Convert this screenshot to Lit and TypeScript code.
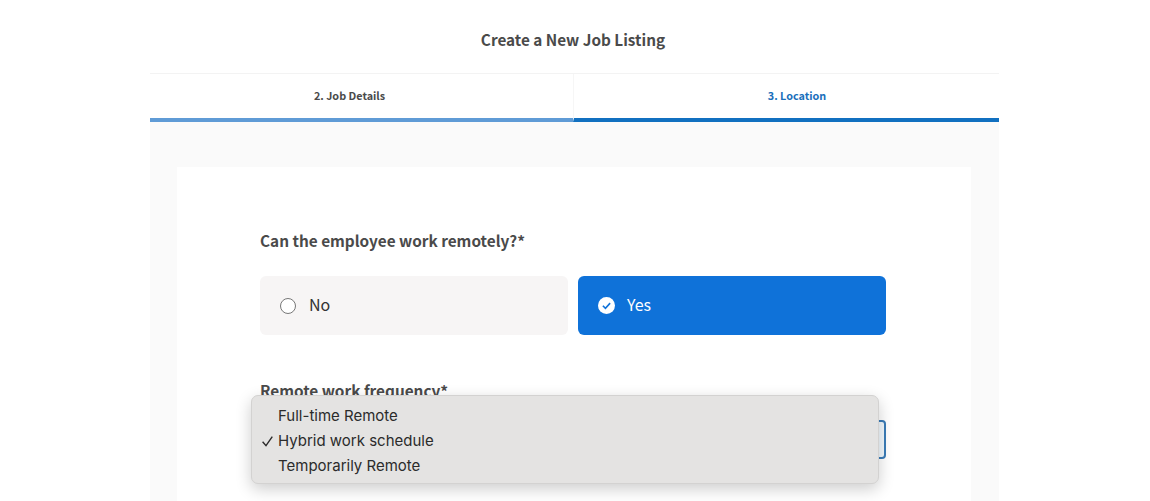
import { LitElement, html, css } from "lit";
import { customElement } from "lit/decorators.js";

@customElement("app-root")
export class AppRoot extends LitElement {
  static styles = css`
    :host {
      display: block;
      width: 1150px;
      height: 501px;
      overflow: hidden;
      background: #fff;
      color: #4a4a4a;
      font-family: "Noto Sans CJK SC", "Noto Sans", sans-serif;
    }
    .page {
      width: 849px;
      margin-left: 150px;
    }
    h1 {
      margin: 0;
      height: 73px;
      box-sizing: border-box;
      padding: 26px 3px 0 0;
      font-size: 15.3px;
      line-height: 26px;
      font-weight: 600;
      text-align: center;
    }
    .tabs {
      display: grid;
      grid-template-columns: 423px 426px;
      border-top: 1px solid #f3f3f3;
    }
    .tab {
      display: flex;
      align-items: center;
      justify-content: center;
      padding: 0 24px 2px 0;
      height: 42px;
      font-size: 10.8px;
      font-weight: 600;
      border-bottom: 4px solid #5f9bd6;
    }
    .tab.active {
      padding: 0 0 2px 21px;
      color: #1a6fbb;
      border-bottom-color: #1170c0;
      border-left: 1px solid #f6f6f6;
    }
    .body {
      background: #fafafa;
      padding: 45px 28px 0 27px;
      height: 400px;
    }
    .card {
      background: #fff;
      padding: 61px 84px 0 83px;
      height: 400px;
      position: relative;
    }
    .label {
      font-size: 15.35px;
      line-height: 24px;
      font-weight: 600;
    }
    .options {
      display: grid;
      grid-template-columns: 308px 308px;
      gap: 10px;
      margin-top: 24px;
    }
    .option {
      height: 59px;
      box-sizing: border-box;
      padding: 0 0 3px 20px;
      border-radius: 6px;
      display: flex;
      align-items: center;
      gap: 13px;
      font-size: 16px;
      background: #f7f5f5;
      color: #333;
    }
    .option.on {
      gap: 12px;
      background: #0f72d9;
      color: #fff;
    }
    .radio {
      width: 14px;
      height: 14px;
      margin-top: 3px;
      border: 1px solid #777;
      border-radius: 50%;
      background: #fff;
    }
    .tick {
      display: block;
      margin-top: 3px;
    }
    .second {
      margin-top: 43px;
    }
    .select {
      height: 39px;
      box-sizing: border-box;
      border: 2px solid #3a7cb8;
      border-radius: 4px;
      margin-top: 18px;
      width: 626px;
      background: #f0f8fd;
    }
    .menu {
      position: absolute;
      left: 74px;
      top: 228px;
      width: 628px;
      height: 89px;
      box-sizing: border-box;
      padding: 7px 0 0 26px;
      background: #e4e3e2;
      border: 1px solid #d3d2d1;
      border-radius: 7px;
      box-shadow: 0 5px 16px rgba(0, 0, 0, 0.2);
      font-family: "Inter", "Liberation Sans", sans-serif;
      font-size: 15px;
      line-height: 25px;
      color: #2b2b2b;
    }
    .item {
      position: relative;
    }
    .check {
      position: absolute;
      left: -17px;
      top: 7px;
    }
  `;

  render() {
    return html`
      <div class="page">
        <h1>Create a New Job Listing</h1>
        <div class="tabs">
          <div class="tab">2. Job Details</div>
          <div class="tab active">3. Location</div>
        </div>
        <div class="body">
          <div class="card">
            <div class="label">Can the employee work remotely?*</div>
            <div class="options">
              <div class="option"><span class="radio"></span>No</div>
              <div class="option on">
                <svg class="tick" width="17" height="17" viewBox="0 0 16 16">
                  <circle cx="8" cy="8" r="8" fill="#fff" />
                  <path d="M4.6 8.2l2.4 2.4 4.4-4.8" fill="none" stroke="#0f72d9" stroke-width="1.5" />
                </svg>
                Yes
              </div>
            </div>
            <div class="label second">Remote work frequency*</div>
            <div class="select"></div>
            <div class="menu">
              <div class="item">Full-time Remote</div>
              <div class="item">
                <svg class="check" width="12" height="12" viewBox="0 0 12 12">
                  <path d="M1.6 6.7L5 10.7L11.3 1.7" fill="none" stroke="#2b2b2b" stroke-width="1.4" />
                </svg>
                Hybrid work schedule
              </div>
              <div class="item">Temporarily Remote</div>
            </div>
          </div>
        </div>
      </div>
    `;
  }
}
